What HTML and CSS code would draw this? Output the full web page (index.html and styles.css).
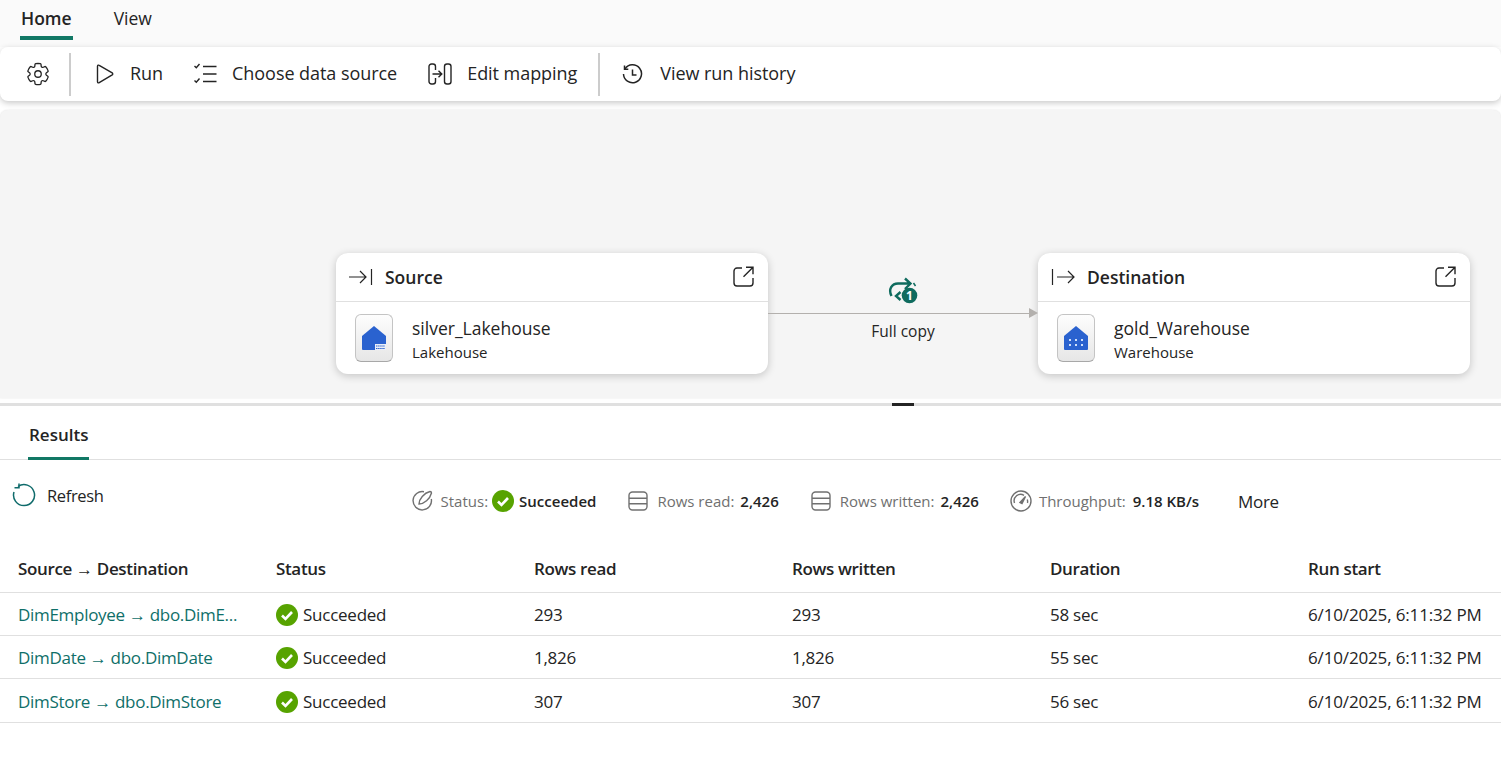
FILE: index.html
```html
<!DOCTYPE html>
<html lang="en">

<head>
    <meta charset="UTF-8">
    <title>Copy job</title>
    <link rel="stylesheet" href="styles.css">
</head>

<body>
    <svg class="defs" width="0" height="0">
        <symbol id="check" viewBox="0 0 22 22">
            <circle cx="11" cy="11" r="11" fill="#57a300"/>
            <path d="M6 11.500l3.500 3.500L16 8" fill="none" stroke="#fff" stroke-width="2.600"/>
        </symbol>
        <symbol id="rows" viewBox="0 0 20 20">
            <rect x="1" y="1" width="18" height="18" rx="3.500" fill="none" stroke="#707070" stroke-width="1.400"/>
            <path d="M1 7.300h18M1 12.700h18" stroke="#707070" stroke-width="1.400"/>
        </symbol>
    </svg>

    <nav class="tabs">
        <a class="tab active">Home</a>
        <a class="tab">View</a>
    </nav>

    <div class="toolbar">
        <button class="tool tool-gear" aria-label="Settings">
            <svg width="26" height="26" viewBox="0 0 24 24" fill="none" stroke="#242424" stroke-width="1.200">
                <path d="M12.012 2.250c.734.008 1.465.093 2.182.253a.75.75 0 0 1 .582.649l.17 1.527a1.384 1.384 0 0 0 1.927 1.116l1.400-.615a.75.75 0 0 1 .85.174 9.793 9.793 0 0 1 2.205 3.792.75.75 0 0 1-.272.825l-1.241.916a1.380 1.380 0 0 0 0 2.226l1.243.915a.75.75 0 0 1 .272.826 9.798 9.798 0 0 1-2.204 3.792.75.75 0 0 1-.849.175l-1.406-.617a1.380 1.380 0 0 0-1.926 1.114l-.17 1.526a.75.75 0 0 1-.571.647 9.518 9.518 0 0 1-4.406 0 .75.75 0 0 1-.572-.647l-.169-1.524a1.382 1.382 0 0 0-1.925-1.110l-1.406.616a.75.75 0 0 1-.85-.175 9.798 9.798 0 0 1-2.203-3.796.75.75 0 0 1 .272-.826l1.243-.916a1.380 1.380 0 0 0 0-2.226l-1.243-.914a.75.75 0 0 1-.272-.826 9.793 9.793 0 0 1 2.205-3.792.75.75 0 0 1 .85-.174l1.400.615a1.387 1.387 0 0 0 1.930-1.118l.17-1.526a.75.75 0 0 1 .583-.65c.718-.159 1.450-.243 2.202-.252z"/>
                <circle cx="12" cy="12" r="3"/>
            </svg>
        </button>
        <span class="sep"></span>
        <button class="tool tool-run">
            <svg width="18" height="20" viewBox="0 0 18 20" fill="none" stroke="#242424" stroke-width="1.400" stroke-linejoin="round">
                <path d="M1.500 2.200c0-.9 1-1.400 1.700-.9l13 7.600c.7.500.7 1.500 0 2L3.200 18.700c-.7.500-1.700 0-1.700-.9z"/>
            </svg>
            <span>Run</span>
        </button>
        <button class="tool tool-source">
            <svg width="24" height="22" viewBox="0 0 24 22" fill="none" stroke="#242424" stroke-width="1.400">
                <path d="M10 3.500h13.500M10 11h13.500M10 18.500h13.500"/>
                <path d="M1.500 3l1.800 1.800L6.500 1M1.500 17.500l1.800 1.800 3.200-3.800"/>
            </svg>
            <span>Choose data source</span>
        </button>
        <button class="tool tool-mapping">
            <svg width="24" height="24" viewBox="0 0 24 24" fill="none" stroke="#242424" stroke-width="1.400">
                <path d="M7.500 8V4.500A2.500 2.500 0 0 0 5 2H3.500A2.500 2.500 0 0 0 1 4.500v15A2.500 2.500 0 0 0 3.500 22H5a2.500 2.500 0 0 0 2.500-2.500V16"/>
                <rect x="16.500" y="2" width="6.500" height="20" rx="2.500"/>
                <path d="M4.500 12h9M10.500 8.700l3.300 3.300-3.300 3.300"/>
            </svg>
            <span>Edit mapping</span>
        </button>
        <span class="sep sep-wide"></span>
        <button class="tool tool-history">
            <svg width="21" height="21" viewBox="0 0 21 21" fill="none" stroke="#242424" stroke-width="1.500">
                <path d="M3 4.800A9 9 0 1 1 1.500 10"/>
                <path d="M2.500 1.500v3.800h3.800M10.500 5.500v5.500h4"/>
            </svg>
            <span>View run history</span>
        </button>
    </div>

    <section class="canvas">
        <div class="card">
            <div class="card-head">
                <svg width="24" height="18" viewBox="0 0 24 18" fill="none" stroke="#242424" stroke-width="1.200">
                    <path d="M0 9h17M11 3l6 6-6 6M22.500 1v16"/>
                </svg>
                <span class="card-title">Source</span>
                <svg class="open" width="21" height="21" viewBox="0 0 21 21" fill="none" stroke="#242424" stroke-width="1.400">
                    <path d="M9 2H4a3 3 0 0 0-3 3v12a3 3 0 0 0 3 3h13a3 3 0 0 0 3-3v-5M13 1.200h7v7M20 1.200L10.500 10.700"/>
                </svg>
            </div>
            <div class="card-body">
                <div class="tile">
                    <svg width="24" height="24" viewBox="0 0 24 24">
                        <path d="M0 10L12 0l12 10v13a1 1 0 0 1-1 1H1a1 1 0 0 1-1-1z" fill="#2a62cf"/>
                        <path d="M13 18h11v6H13z" fill="#e9eef8"/>
                        <path d="M14 20h9M14 22.500h9" stroke="#2a62cf" stroke-width="1" stroke-dasharray="1.500 .6"/>
                    </svg>
                </div>
                <div class="card-text">
                    <div class="card-name">silver_Lakehouse</div>
                    <div class="card-type">Lakehouse</div>
                </div>
            </div>
        </div>

        <div class="link">
            <svg class="link-icon" width="30" height="27" viewBox="0 0 30 27" fill="none" stroke="#0f6b5e" stroke-width="2.400">
                <path d="M3.500 19C0 12 4 6.500 10 6.500h12M17 1.500l5.500 5-5.500 5.500"/>
                <path d="M25.500 6l2 3" stroke-width="1.500"/>
                <path d="M12.500 15l-4.500 4 4.500 4" stroke-width="2.400"/>
                <circle cx="21.500" cy="18.500" r="7.800" fill="#0f6b5e" stroke="none"/>
                <text x="21.500" y="23" class="link-num">1</text>
            </svg>
            <div class="link-line"></div>
            <div class="link-label">Full copy</div>
        </div>

        <div class="card">
            <div class="card-head">
                <svg width="24" height="18" viewBox="0 0 24 18" fill="none" stroke="#242424" stroke-width="1.200">
                    <path d="M1.500 1v16M6 9h17M17 3l6 6-6 6"/>
                </svg>
                <span class="card-title">Destination</span>
                <svg class="open" width="21" height="21" viewBox="0 0 21 21" fill="none" stroke="#242424" stroke-width="1.400">
                    <path d="M9 2H4a3 3 0 0 0-3 3v12a3 3 0 0 0 3 3h13a3 3 0 0 0 3-3v-5M13 1.200h7v7M20 1.200L10.500 10.700"/>
                </svg>
            </div>
            <div class="card-body">
                <div class="tile">
                    <svg width="24" height="24" viewBox="0 0 24 24">
                        <path d="M0 10L12 0l12 10v13a1 1 0 0 1-1 1H1a1 1 0 0 1-1-1z" fill="#2a62cf"/>
                        <path d="M5 13h2v2H5zM11 13h2v2h-2zM17 13h2v2h-2zM5 18h2v2H5zM11 18h2v2h-2zM17 18h2v2h-2z" fill="#cfe0fa"/>
                    </svg>
                </div>
                <div class="card-text">
                    <div class="card-name">gold_Warehouse</div>
                    <div class="card-type">Warehouse</div>
                </div>
            </div>
        </div>
    </section>

    <div class="splitter"><span class="handle"></span></div>

    <div class="result-tabs">
        <a class="result-tab">Results</a>
    </div>

    <div class="summary">
        <button class="refresh">
            <svg width="24" height="24" viewBox="0 0 24 24" fill="none" stroke="#0f6b6b" stroke-width="1.500">
                <path d="M6 3.500A10.500 10.500 0 1 1 2 9"/>
                <path d="M7 0.500v4.300H2.500"/>
            </svg>
            <span>Refresh</span>
        </button>
        <div class="stats">
            <div class="stat stat-status">
                <svg class="stat-icon" width="21" height="21" viewBox="0 0 21 21" fill="none" stroke="#707070" stroke-width="1.400">
                    <path d="M12 1.700A9.200 9.200 0 1 0 19.300 9"/>
                    <path d="M7 14C7 9 12 3 18 1.500c1 0 1.500.5 1.500 1.500C18 9 12 14 7 14z"/>
                </svg>
                <span class="stat-label">Status:</span>
                <svg class="stat-check" width="22" height="22"><use href="#check"/></svg>
                <b>Succeeded</b>
            </div>
            <div class="stat stat-read">
                <svg class="stat-icon" width="20" height="20"><use href="#rows"/></svg>
                <span class="stat-label">Rows read:</span>
                <b>2,426</b>
            </div>
            <div class="stat stat-written">
                <svg class="stat-icon" width="20" height="20"><use href="#rows"/></svg>
                <span class="stat-label">Rows written:</span>
                <b>2,426</b>
            </div>
            <div class="stat stat-speed">
                <svg class="stat-icon" width="22" height="22" viewBox="0 0 22 22" fill="none" stroke="#707070" stroke-width="1.400">
                    <circle cx="11" cy="11" r="10"/>
                    <path d="M4.500 13A6.500 6.500 0 0 1 14 5.300"/>
                    <path d="M10 12.500L15.500 6.500 12 13.500z" fill="#707070"/>
                    <path d="M17.300 9.500a6.500 6.500 0 0 1 .2 3.500"/>
                </svg>
                <span class="stat-label">Throughput:</span>
                <b>9.18 KB/s</b>
            </div>
            <button class="more">More</button>
        </div>
    </div>

    <table class="runs">
        <thead>
            <tr>
                <th>Source → Destination</th>
                <th>Status</th>
                <th>Rows read</th>
                <th>Rows written</th>
                <th>Duration</th>
                <th>Run start</th>
            </tr>
        </thead>
        <tbody>
            <tr>
                <td><a class="run-link">DimEmployee → dbo.DimE...</a></td>
                <td><span class="ok"><svg width="22" height="22"><use href="#check"/></svg>Succeeded</span></td>
                <td>293</td>
                <td>293</td>
                <td>58 sec</td>
                <td class="run-time">6/10/2025, 6:11:32 PM</td>
            </tr>
            <tr>
                <td><a class="run-link">DimDate → dbo.DimDate</a></td>
                <td><span class="ok"><svg width="22" height="22"><use href="#check"/></svg>Succeeded</span></td>
                <td>1,826</td>
                <td>1,826</td>
                <td>55 sec</td>
                <td class="run-time">6/10/2025, 6:11:32 PM</td>
            </tr>
            <tr>
                <td><a class="run-link">DimStore → dbo.DimStore</a></td>
                <td><span class="ok"><svg width="22" height="22"><use href="#check"/></svg>Succeeded</span></td>
                <td>307</td>
                <td>307</td>
                <td>56 sec</td>
                <td class="run-time">6/10/2025, 6:11:32 PM</td>
            </tr>
        </tbody>
    </table>
</body>

</html>
```

FILE: styles.css
```css
* {
    box-sizing: border-box;
}

body {
    margin: 0;
    height: 784px;
    overflow: hidden;
    background-color: #fff;
    color: #242424;
    font-family: "Open Sans", "Noto Sans", sans-serif;
    font-size: 17.5px;
}

button {
    border: 0;
    padding: 0;
    background: none;
    color: inherit;
    font: inherit;
    letter-spacing: inherit;
}

svg {
    display: block;
    flex: none;
}

.defs {
    position: absolute;
}

/* top tabs */
.tabs {
    display: flex;
    gap: 40px;
    height: 47px;
    padding-left: 20px;
    background-color: #fafafa;
}

.tab {
    height: 40px;
    padding: 5px 1px 0;
    line-height: 26px;
}

.tab.active {
    border-bottom: 4px solid #117865;
    font-weight: 600;
}

/* ribbon */
.toolbar {
    display: flex;
    align-items: center;
    height: 54px;
    border-radius: 8px;
    background-color: #fff;
    box-shadow: 0 2px 6px rgba(0, 0, 0, 0.22);
    font-size: 18px;
    letter-spacing: -0.05px;
}

.tool {
    display: flex;
    align-items: center;
}

.tool span {
    margin-top: -3px;
}

.tool-gear {
    margin-left: 25px;
}

.sep {
    width: 2px;
    height: 43px;
    margin-left: 18px;
    background-color: #ccc;
}

.tool-run {
    gap: 16px;
    margin-left: 25px;
}

.tool-source {
    gap: 15px;
    margin-left: 30px;
}

.tool-mapping {
    gap: 15px;
    margin-left: 31px;
}

.sep-wide {
    margin-left: 21px;
}

.tool-history {
    gap: 17px;
    margin-left: 22px;
}

/* diagram */
.canvas {
    display: flex;
    height: 288px;
    margin-top: 9px;
    padding: 143px 0 0 336px;
    border-radius: 8px 8px 0 0;
    background-color: #f5f5f5;
    box-shadow: 0 0 2px rgba(0, 0, 0, 0.12);
}

.card {
    width: 432px;
    height: 121px;
    border-radius: 12px;
    background-color: #fff;
    box-shadow: 0 2px 8px rgba(0, 0, 0, 0.2);
}

.card-head {
    display: flex;
    align-items: center;
    height: 49px;
    padding: 0 14px 1px 13px;
    border-bottom: 1px solid #e0e0e0;
}

.card-title {
    flex: 1;
    margin-left: 12px;
    font-weight: 600;
}

.card-body {
    display: flex;
    gap: 19px;
    padding: 12px 0 0 19px;
}

.card-text {
    padding-top: 1px;
}

.tile {
    display: flex;
    align-items: center;
    justify-content: center;
    width: 38px;
    height: 48px;
    border: 1px solid #c4c4c4;
    border-bottom-color: #a8a8a8;
    border-radius: 6px;
    background: linear-gradient(#fdfdfd, #e6e6e6);
}

.card-name {
    line-height: 26px;
}

.card-type {
    font-size: 15px;
    line-height: 22px;
}

.link {
    position: relative;
    width: 270px;
    height: 121px;
}

.link-icon {
    position: absolute;
    top: 24px;
    left: 120px;
}

.link-num {
    fill: #fff;
    stroke: none;
    font-size: 12px;
    font-weight: 700;
    text-anchor: middle;
}

.link-line {
    position: absolute;
    top: 60px;
    left: 0;
    width: 261px;
    height: 1px;
    background-color: #b3b0ad;
}

.link-line::after {
    content: "";
    position: absolute;
    top: -5px;
    right: -9px;
    border-top: 5px solid transparent;
    border-bottom: 5px solid transparent;
    border-left: 9px solid #b3b0ad;
}

.link-label {
    position: absolute;
    top: 67px;
    width: 270px;
    font-size: 15.5px;
    text-align: center;
}

/* splitter */
.splitter {
    display: flex;
    justify-content: center;
    height: 3px;
    margin-top: 5px;
    padding-left: 304px;
    background-color: #e0e0e0;
}

.handle {
    width: 22px;
    background-color: #242424;
}

/* results */
.result-tabs {
    height: 54px;
    padding-left: 28px;
    border-bottom: 1px solid #e0e0e0;
}

.result-tab {
    display: inline-block;
    height: 54px;
    padding: 17px 1px 0;
    border-bottom: 3px solid #117865;
    font-size: 17px;
    font-weight: 600;
    line-height: 24px;
}

.summary {
    display: flex;
    height: 85px;
}

.refresh {
    display: flex;
    align-items: center;
    align-self: flex-start;
    gap: 11px;
    margin: 23px 0 0 12px;
    font-size: 16.5px;
    letter-spacing: -0.35px;
}

.stats {
    display: flex;
    align-items: center;
    align-self: flex-start;
    margin: 30px 0 0 308px;
    font-size: 15px;
}

.stat {
    display: flex;
    align-items: center;
    gap: 6px;
    margin-top: -2px;
}

.stat-icon {
    margin-right: 3px;
}

.stat-status .stat-icon {
    margin-right: 2px;
}

.stat-label {
    color: #707070;
}

.stat b {
    font-weight: 600;
}

.stat-check {
    margin: 0 -1px 0 -2px;
}

.stat-read {
    margin-left: 32px;
}

.stat-written {
    margin-left: 32px;
}

.stat-speed {
    margin-left: 31px;
}

.stat-speed .stat-icon {
    margin-right: 1px;
}

.stat-speed b {
    margin-left: 1px;
}

.more {
    margin-left: 39px;
    font-size: 17px;
    letter-spacing: -0.35px;
}

/* table */
.runs {
    width: 1501px;
    border-collapse: collapse;
    table-layout: fixed;
    font-size: 17px;
    letter-spacing: -0.25px;
}

.runs th,
.runs td {
    width: 258px;
    padding: 0 0 0 18px;
    border-bottom: 1px solid #e0e0e0;
    text-align: left;
    white-space: nowrap;
}

.runs th {
    height: 47px;
    font-weight: 600;
    letter-spacing: -0.35px;
}

.runs td {
    height: 43px;
    padding-top: 2px;
}

.runs tr:last-child td {
    height: 44px;
    padding-top: 3px;
}

.run-link {
    color: #0f6f69;
    letter-spacing: -0.3px;
}

.runs .run-time {
    letter-spacing: -0.15px;
}

.ok {
    display: flex;
    align-items: center;
    gap: 5px;
}
```
